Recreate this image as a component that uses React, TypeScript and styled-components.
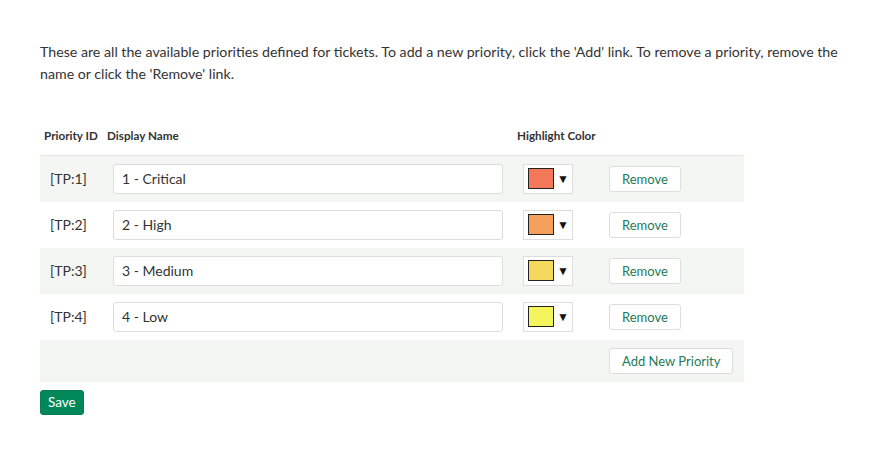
import React from "react";
import styled, { createGlobalStyle } from "styled-components";

const Global = createGlobalStyle`
  html, body { margin: 0; padding: 0; background: #fff; }
  body { font-family: Lato, "Open Sans", sans-serif; color: #333; }
  * { box-sizing: border-box; }
`;

const Page = styled.div`
  padding: 41px 40px 40px 40px;
  width: 892px;
`;

const Intro = styled.p`
  margin: 0 0 31px 0;
  font-size: 14.2px;
  line-height: 22px;
  color: #333;
  max-width: 812px;
`;

const Table = styled.table`
  width: 704px;
  border-collapse: collapse;
  table-layout: fixed;
`;

const Th = styled.th<{ $w: number }>`
  width: ${(p) => p.$w}px;
  text-align: left;
  font-size: 11.7px;
  font-weight: 700;
  color: #333;
  padding: 0 4px;
  height: 39px;
  border-bottom: 1px solid #e3e6e3;
  white-space: nowrap;
`;

const Row = styled.tr<{ $shade: boolean }>`
  background: ${(p) => (p.$shade ? "#f3f6f3" : "#fff")};
`;

const Td = styled.td`
  padding: 8px 10px;
  font-size: 14px;
  color: #333;
  vertical-align: middle;
  height: 46px;
`;

const FootTd = styled(Td)`
  height: 42px;
`;

const NameInput = styled.input`
  width: 390px;
  height: 30px;
  border: 1px solid #ddd;
  border-radius: 3px;
  padding: 0 8px;
  font-family: Lato, sans-serif;
  font-size: 14px;
  color: #333;
  background: #fff;
  outline: none;
`;

const Picker = styled.div`
  width: 50px;
  height: 30px;
  border: 1px solid #ddd;
  background: #fff;
  display: flex;
  align-items: center;
  padding-left: 4px;
  gap: 3px;
`;

const Swatch = styled.span<{ $c: string }>`
  display: block;
  width: 26px;
  height: 21px;
  background: ${(p) => p.$c};
  border: 1px solid #222;
`;

const Arrow = styled.span`
  font-size: 12px;
  color: #111;
  line-height: 1;
`;

const LinkButton = styled.button`
  height: 26px;
  padding: 0 12px;
  border: 1px solid #ddd;
  border-radius: 3px;
  background: #fff;
  color: #1f7a58;
  font-family: Lato, sans-serif;
  font-size: 13px;
  cursor: pointer;
`;

const SaveButton = styled.button`
  margin-top: 8px;
  height: 25px;
  padding: 0 7px;
  border: 1px solid #0b7a55;
  border-radius: 3px;
  background: #00875a;
  color: #fff;
  font-family: Lato, sans-serif;
  font-size: 13.5px;
`;

const priorities = [
  { id: "[TP:1]", name: "1 - Critical", color: "#f4775a" },
  { id: "[TP:2]", name: "2 - High", color: "#f5a05c" },
  { id: "[TP:3]", name: "3 - Medium", color: "#f5d95c" },
  { id: "[TP:4]", name: "4 - Low", color: "#f4f55c" },
];

export default function App() {
  return (
    <Page>
      <Global />
      <Intro>
        These are all the available priorities defined for tickets. To add a new priority, click the 'Add' link. To
        remove a priority, remove the name or click the 'Remove' link.
      </Intro>
      <Table>
        <thead>
          <tr>
            <Th $w={63}>Priority ID</Th>
            <Th $w={410}>Display Name</Th>
            <Th $w={86}>Highlight Color</Th>
            <Th $w={145}></Th>
          </tr>
        </thead>
        <tbody>
          {priorities.map((p, i) => (
            <Row key={p.id} $shade={i % 2 === 0}>
              <Td>{p.id}</Td>
              <Td>
                <NameInput defaultValue={p.name} />
              </Td>
              <Td>
                <Picker>
                  <Swatch $c={p.color} />
                  <Arrow>▼</Arrow>
                </Picker>
              </Td>
              <Td>
                <LinkButton>Remove</LinkButton>
              </Td>
            </Row>
          ))}
          <Row $shade>
            <FootTd />
            <FootTd />
            <FootTd />
            <FootTd>
              <LinkButton>Add New Priority</LinkButton>
            </FootTd>
          </Row>
        </tbody>
      </Table>
      <SaveButton>Save</SaveButton>
    </Page>
  );
}
